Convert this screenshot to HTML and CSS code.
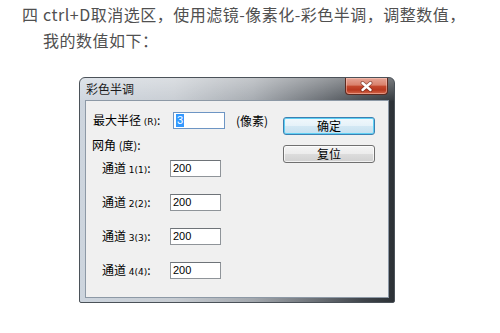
FILE: index.html
```html
<!DOCTYPE html>
<html lang="zh-CN">
<head>
<meta charset="utf-8">
<title>彩色半调</title>
<link rel="stylesheet" href="styles.css">
</head>
<body>
<div class="page">
  <p class="step"><span class="num">四</span><span class="txt">ctrl+D取消选区，使用滤镜-像素化-彩色半调，调整数值，<br>我的数值如下：</span></p>

  <div class="win">
    <div class="titlebar">
      <span class="title">彩色半调</span>
      <span class="close">
        <svg width="13" height="11" viewBox="0 0 13 11" aria-hidden="true">
          <path d="M2.5 2 L10.5 9 M10.5 2 L2.5 9" stroke="#5a2016" stroke-width="4" stroke-linecap="round" opacity="0.55"/>
          <path d="M2.5 2 L10.5 9 M10.5 2 L2.5 9" stroke="#ffffff" stroke-width="2.4" stroke-linecap="round"/>
        </svg>
      </span>
    </div>
    <div class="client">
      <div class="fields">
        <div class="row row-radius">
          <span class="lbl lbl-radius">最大半径 <small>(R)</small>:</span>
          <span class="box focus"><span class="sel">3</span></span>
          <span class="unit">(像素)</span>
        </div>
        <div class="row row-angle"><span class="lbl">网角 <span class="paren">(度)</span>:</span></div>
        <div class="channels">
          <div class="row ch"><span class="lbl lbl-ch">通道 <small>1(1)</small>:</span><span class="box">200</span></div>
          <div class="row ch"><span class="lbl lbl-ch">通道 <small>2(2)</small>:</span><span class="box">200</span></div>
          <div class="row ch"><span class="lbl lbl-ch">通道 <small>3(3)</small>:</span><span class="box">200</span></div>
          <div class="row ch"><span class="lbl lbl-ch">通道 <small>4(4)</small>:</span><span class="box">200</span></div>
        </div>
      </div>
      <div class="buttons">
        <div class="btn default">确定</div>
        <div class="btn">复位</div>
      </div>
    </div>
  </div>
</div>
</body>
</html>
```

FILE: styles.css
```css
html, body {
  margin: 0;
  padding: 0;
  background: #ffffff;
}

.page {
  width: 500px;
  height: 333px;
  overflow: hidden;
}

.step {
  margin: 0;
  padding: 1px 0 0 22px;
  display: flex;
  font-family: "Noto Sans CJK SC", "Noto Sans", sans-serif;
  font-size: 16px;
  line-height: 26px;
  color: #505050;
}

.step .num {
  flex: 0 0 21px;
}

.step .txt {
  white-space: nowrap;
  letter-spacing: 0.5px;
}

/* ---------- window ---------- */
.win {
  box-sizing: border-box;
  width: 316px;
  height: 226px;
  margin: 24px 0 0 79px;
  border: 1px solid #4b5259;
  border-radius: 6px 6px 2px 2px;
  background:
    linear-gradient(to bottom, rgba(255,255,255,0.35) 0px, rgba(255,255,255,0.05) 22px, rgba(255,255,255,0) 23px),
    linear-gradient(to right, #cdd5de 0%, #c7ccd2 30%, #a3a8ae 55%, #6c7177 75%, #40454b 90%, #2c3136 100%);
  display: flex;
  flex-direction: column;
  font-family: "Noto Sans CJK SC", sans-serif;
  color: #000000;
}

.titlebar {
  height: 22px;
  display: flex;
  justify-content: space-between;
  align-items: flex-start;
}

.title {
  padding-left: 6px;
  font-size: 12px;
  line-height: 22px;
  color: #1b1b1b;
}

.close {
  width: 43px;
  height: 17px;
  margin-right: 6px;
  box-sizing: border-box;
  border: 1px solid #5d2a20;
  border-top: none;
  border-radius: 0 0 4px 4px;
  background: linear-gradient(to bottom, #e6a596 0%, #d9806b 45%, #c44a2f 50%, #b8381f 75%, #d6694c 100%);
  box-shadow: inset 0 0 0 1px rgba(255,210,200,0.45);
  display: flex;
  align-items: center;
  justify-content: center;
}

.close svg {
  display: block;
}

.client {
  box-sizing: border-box;
  width: 304px;
  height: 198px;
  margin-left: 5px;
  border: 1px solid #8d99a6;
  background: #f0f0f0;
  display: flex;
  font-size: 12px;
}

.fields {
  width: 197px;
  padding-top: 11px;
  display: flex;
  flex-direction: column;
}

.row {
  display: flex;
  align-items: center;
  height: 17px;
  white-space: nowrap;
}

.row-radius {
  padding-left: 7px;
}

.lbl {
  font-size: 12px;
  line-height: 14px;
}

.lbl small {
  font-size: 9px;
  font-family: "DejaVu Sans", "Noto Sans CJK SC", sans-serif;
}

.lbl-radius {
  width: 80px;
}

.row-angle {
  padding-left: 6px;
  margin-top: 9px;
  height: 14px;
}

.paren {
  font-size: 11px;
}

.channels {
  margin-top: 8px;
  display: flex;
  flex-direction: column;
  gap: 17px;
}

.ch {
  padding-left: 16px;
}

.lbl-ch {
  width: 68px;
}

.box {
  box-sizing: border-box;
  width: 51px;
  height: 17px;
  border: 1px solid #8f9499;
  border-top-color: #6e7378;
  background: #ffffff;
  padding: 0 2px;
  font-family: "Liberation Sans", Arial, sans-serif;
  font-size: 11px;
  line-height: 15px;
  color: #000000;
}

.box.focus {
  width: 52px;
  border-color: #6d95c4;
  padding-left: 2px;
}

.sel {
  display: inline-block;
  background: #3399ff;
  color: #ffffff;
  padding: 0 1px;
  line-height: 13px;
  margin-top: 1px;
}

.unit {
  margin-left: 11px;
  font-size: 12px;
}

/* ---------- buttons ---------- */
.buttons {
  padding-top: 16px;
  display: flex;
  flex-direction: column;
  gap: 10px;
}

.btn {
  box-sizing: border-box;
  width: 92px;
  height: 18px;
  border: 1px solid #707070;
  border-radius: 3px;
  background: linear-gradient(to bottom, #f4f4f4 0%, #ececec 48%, #dcdcdc 52%, #d0d0d0 100%);
  box-shadow: inset 0 0 0 1px rgba(255,255,255,0.7);
  text-align: center;
  font-size: 12px;
  line-height: 16px;
  color: #000000;
}

.btn.default {
  border-color: #3c7fb1;
  background: linear-gradient(to bottom, #f1f8fc 0%, #e6f2f9 48%, #d3e8f4 52%, #c6e0ef 100%);
  box-shadow: inset 0 0 0 1px #5fd0f4;
}
```
